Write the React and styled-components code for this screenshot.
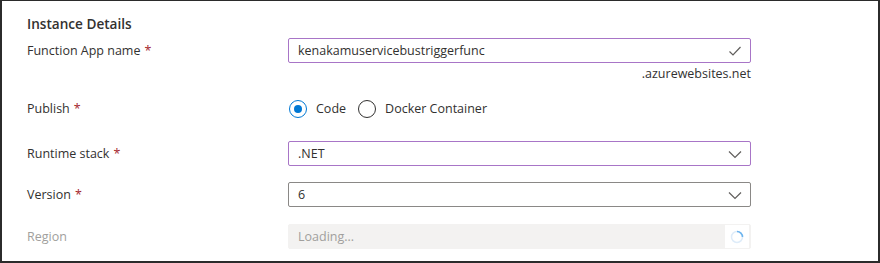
import React from 'react';
import styled, { createGlobalStyle } from 'styled-components';

const GlobalStyle = createGlobalStyle`
  html, body { margin: 0; padding: 0; background: #fff; }
  body { font-family: "Open Sans", "Noto Sans", sans-serif; color: #323130; }
`;

const Frame = styled.div`
  box-sizing: border-box;
  width: 880px;
  height: 263px;
  overflow: hidden;
  border: 2px solid #2b2b2b;
  border-top-width: 1px;
  padding: 13px 0 0 25px;
`;

const Heading = styled.h2`
  margin: 0 0 4px;
  font-size: 13.6px;
  font-weight: 600;
  line-height: 20px;
`;

const Row = styled.div`
  display: grid;
  grid-template-columns: 261px 463px;
  align-items: start;
  margin-bottom: ${p => p.gap || 16}px;
`;

const Label = styled.div`
  font-size: 12.5px;
  line-height: 25px;
  color: ${p => (p.disabled ? '#a19f9d' : '#323130')};
`;

const Star = styled.span`
  color: #a4262c;
  margin-left: 4px;
`;

const Field = styled.div`
  display: flex;
  flex-direction: column;
  align-items: flex-end;
`;

const Box = styled.div`
  box-sizing: border-box;
  width: 100%;
  height: 25px;
  display: flex;
  align-items: center;
  justify-content: space-between;
  padding: 0 8px 0 9px;
  border: 1px solid ${p => p.border || '#8a8886'};
  border-radius: 2px;
  background: ${p => p.bg || '#fff'};
  font-size: 12.5px;
  color: ${p => (p.muted ? '#a19f9d' : '#323130')};
`;

const Suffix = styled.div`
  font-size: 12.5px;
  line-height: 20px;
  margin-top: 1px;
`;

const Radios = styled.div`
  display: flex;
  align-items: center;
  height: 25px;
  padding-left: 1px;
  font-size: 12.5px;
`;

const Radio = styled.span`
  box-sizing: border-box;
  width: 18px;
  height: 18px;
  border-radius: 50%;
  border: 1px solid ${p => (p.checked ? '#0078d4' : '#323130')};
  display: inline-flex;
  align-items: center;
  justify-content: center;
  margin-right: 9px;
  &::after {
    content: '';
    width: 8px;
    height: 8px;
    border-radius: 50%;
    background: ${p => (p.checked ? '#0078d4' : 'transparent')};
  }
`;

const RadioText = styled.span`
  margin-right: 12px;
`;

const Spinner = styled.span`
  width: 24px;
  height: 23px;
  margin-right: -7px;
  background: #fff;
  display: flex;
  align-items: center;
  justify-content: center;
`;

const Check = () => (
  <svg width="14" height="14" viewBox="0 0 14 14">
    <path d="M1.5 7.5l3.5 3.5 7.5-8" fill="none" stroke="#605e5c" strokeWidth="1.2" />
  </svg>
);

const Chevron = () => (
  <svg width="14" height="14" viewBox="0 0 14 14">
    <path d="M1 4.5l6 6 6-6" fill="none" stroke="#605e5c" strokeWidth="1.2" />
  </svg>
);

export default function App() {
  return (
    <>
      <GlobalStyle />
      <Frame>
        <Heading>Instance Details</Heading>
        <Row gap={12}>
          <Label>Function App name<Star>*</Star></Label>
          <Field>
            <Box border="#a875c7">kenakamuservicebustriggerfunc<Check /></Box>
            <Suffix>.azurewebsites.net</Suffix>
          </Field>
        </Row>
        <Row gap={20}>
          <Label>Publish<Star>*</Star></Label>
          <Radios>
            <Radio checked />
            <RadioText>Code</RadioText>
            <Radio />
            <RadioText>Docker Container</RadioText>
          </Radios>
        </Row>
        <Row>
          <Label>Runtime stack<Star>*</Star></Label>
          <Box border="#a875c7">.NET<Chevron /></Box>
        </Row>
        <Row gap={17}>
          <Label>Version<Star>*</Star></Label>
          <Box>6<Chevron /></Box>
        </Row>
        <Row>
          <Label disabled>Region</Label>
          <Box bg="#f3f2f1" border="#f3f2f1" muted>
            Loading...
            <Spinner>
              <svg width="14" height="14" viewBox="0 0 14 14">
                <circle cx="7" cy="7" r="5.5" fill="none" stroke="#deecf9" strokeWidth="1.5" />
                <path d="M7 1.5a5.5 5.5 0 0 1 5.5 5.5" fill="none" stroke="#6cb4ee" strokeWidth="1.5" />
              </svg>
            </Spinner>
          </Box>
        </Row>
      </Frame>
    </>
  );
}
